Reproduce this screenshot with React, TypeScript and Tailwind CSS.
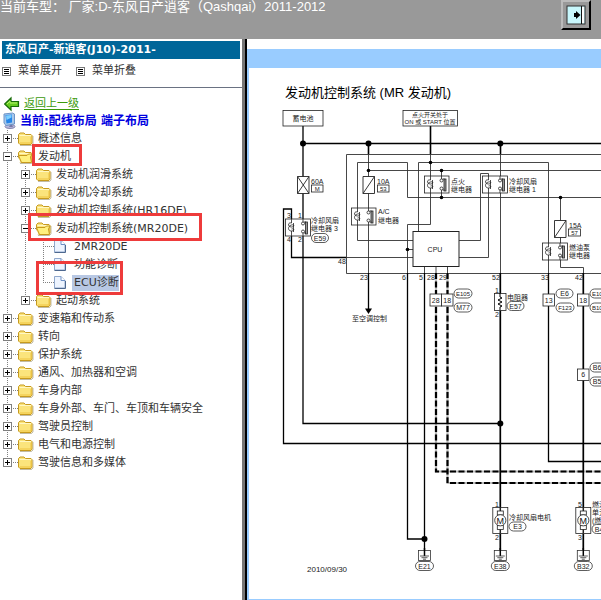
import React, { useState } from "react";

type Node = {
  label: string;
  children?: Node[];
  page?: boolean;
  marker?: string;
};

const tree: Node[] = [
  { label: "概述信息" },
  {
    label: "发动机",
    marker: "left-8 -top-1 w-[50px] h-[22px]",
    children: [
      { label: "发动机润滑系统" },
      { label: "发动机冷却系统" },
      { label: "发动机控制系统(HR16DE)" },
      {
        label: "发动机控制系统(MR20DE)",
        marker: "left-7 -top-[7px] w-[174px] h-7",
        children: [
          { label: "2MR20DE", page: true },
          { label: "功能诊断", page: true },
          {
            label: "ECU诊断",
            page: true,
            marker: "left-9 -top-[13px] w-[87px] h-[34px]",
          },
        ],
      },
      { label: "起动系统" },
    ],
  },
  { label: "变速箱和传动系" },
  { label: "转向" },
  { label: "保护系统" },
  { label: "通风、加热器和空调" },
  { label: "车身内部" },
  { label: "车身外部、车门、车顶和车辆安全" },
  { label: "驾驶员控制" },
  { label: "电气和电源控制" },
  { label: "驾驶信息和多媒体" },
];

const dots = { stroke: "#808080", strokeDasharray: "1 1" };

function Guide({ visible }: { visible: boolean }) {
  return (
    <svg className="w-[18px] h-[18px] shrink-0" viewBox="0 0 18 18">
      {visible && <path d="M7.5 0V18" {...dots} />}
    </svg>
  );
}

function Branch({ last, page, open }: { last: boolean; page?: boolean; open: boolean }) {
  return (
    <svg className="w-[18px] h-[18px] block" viewBox="0 0 18 18" fill="none">
      <path d={last ? "M7.5 0V9" : "M7.5 0V18"} {...dots} />
      <path d="M7 8.5H18" {...dots} />
      {!page && (
        <>
          <rect x="3.5" y="4.5" width="8" height="8" fill="#fff" stroke="#808080" />
          <path d="M5 8.5H10" stroke="#000" />
          {!open && <path d="M7.5 6V11" stroke="#000" />}
        </>
      )}
    </svg>
  );
}

function FolderIcon({ open }: { open: boolean }) {
  return (
    <svg className="w-[18px] h-[18px] shrink-0" viewBox="0 0 18 18">
      <path d="M2 15.5H13.5L15 14V6" fill="none" stroke="#9a8f6a" opacity=".6" />
      <path
        d="M.5 13V4.5L2 3H6L7.5 4.5H13L14 5.5V13L13 14.5H2Z"
        fill="#fbe47c"
        stroke="#c79a1e"
      />
      <path d="M1.5 5.5H13" stroke="#fff7c4" />
      <path d="M2 13H13V7" fill="none" stroke="#efc441" />
      {open && (
        <>
          <path d="M0 6V14L3 15L0 9Z" fill="#fff" />
          <path
            d="M.5 7.5H9L10.5 6H14L12.5 9L13.5 14.5H3.5Z"
            fill="#fff07e"
            stroke="#c79a1e"
          />
        </>
      )}
    </svg>
  );
}

function PageIcon() {
  return (
    <svg className="w-[18px] h-[18px] shrink-0" viewBox="0 0 18 18">
      <path d="M.5 2.5H7L11 6.5V14H.5Z" fill="#edf4ff" stroke="#90a8cc" />
      <path d="M7 2.5V6.5H11" fill="#fff" stroke="#6c8fc4" />
      <path d="M.5 14.5H11.5V7" fill="none" stroke="#4d688f" />
    </svg>
  );
}

function TreeRow({ node, guides, last }: { node: Node; guides: boolean[]; last: boolean }) {
  const [open, setOpen] = useState(!!node.children);
  const selected = node.label === "ECU诊断";

  return (
    <li>
      <div className="relative flex items-center h-[18px] whitespace-nowrap">
        {guides.map((g, i) => (
          <Guide key={i} visible={g} />
        ))}
        {node.page ? (
          <Branch last={last} page open={false} />
        ) : (
          <button
            aria-label={node.label}
            aria-expanded={open}
            onClick={() => setOpen(!open)}
            className="shrink-0"
          >
            <Branch last={last} open={open} />
          </button>
        )}
        {node.page ? <PageIcon /> : <FolderIcon open={open} />}
        <a
          href="#"
          className={
            selected
              ? "pl-0.5 h-4 leading-4 bg-[#b8c8e4] text-[#333]"
              : "pl-0.5 h-4 leading-4 text-[#333]"
          }
        >
          {node.label}
        </a>
        {node.marker && (
          <span
            className={`absolute z-10 border-3 border-[#ee3b3b] pointer-events-none ${node.marker}`}
          />
        )}
      </div>
      {open && node.children && (
        <ul>
          {node.children.map((child, i) => (
            <TreeRow
              key={child.label}
              node={child}
              guides={[...guides, !last]}
              last={i === node.children!.length - 1}
            />
          ))}
        </ul>
      )}
    </li>
  );
}

function MenuIcon() {
  return (
    <svg className="w-[9px] h-[9px]" viewBox="0 0 9 9" fill="none">
      <rect x=".5" y=".5" width="8" height="8" stroke="#777" />
      <path d="M2 2.5H7M2 4.5H7M2 6.5H7" stroke="#000" />
    </svg>
  );
}

function Sidebar() {
  return (
    <aside className="w-[242px] shrink-0 bg-white text-[11px] font-['DejaVu_Sans','Noto_Sans_CJK_SC',sans-serif]">
      <h1 className="mt-0.5 ml-0.5 mr-0.5 h-[18px] pl-[3px] leading-[18px] bg-[#069] text-white font-bold whitespace-nowrap">
        东风日产-新逍客(J10)-2011-
      </h1>
      <div className="flex gap-3.5 h-[29px] pt-0.5 pl-0.5 pb-1.5 items-center border-b border-gray-500 text-[#333]">
        <button className="flex items-center gap-[7px]">
          <MenuIcon />
          菜单展开
        </button>
        <button className="flex items-center gap-[7px]">
          <MenuIcon />
          菜单折叠
        </button>
      </div>
      <nav className="pt-2">
        <div className="flex items-center h-4 pl-1 gap-1">
          <svg className="w-4 h-4" viewBox="0 0 16 16">
            <path
              d="M.7 8L7 2V5.5H14.5V10.5H7V14Z"
              fill="#66cc20"
              stroke="#176b08"
              strokeWidth="1.2"
            />
            <path d="M3 8L6 5V7H13" fill="none" stroke="#b5f36d" />
          </svg>
          <a href="#" className="text-[#3c9a0c] underline underline-offset-2 leading-4">
            返回上一级
          </a>
        </div>
        <div className="flex items-center h-[18px] pl-0.5 text-xs font-bold text-[#0000e0] whitespace-nowrap">
          <svg className="w-[18px] h-[18px]" viewBox="0 0 18 18">
            <ellipse cx="8" cy="14.5" rx="5" ry="2" fill="#b9b9dd" stroke="#8585ae" />
            <path d="M9 11L11 15L7 15Z" fill="#777aa8" />
            <path d="M2 2L10.5 1L12.5 2V12L4 13.5L2 11Z" fill="#a7c7ea" stroke="#6d94c7" />
            <path d="M3.5 3L10 2.5V10.5L4.5 11.5Z" fill="#2585e8" />
            <path d="M4 3.5L9.5 3V5.5L4.5 8Z" fill="#7fd0ff" />
          </svg>
          当前:配线布局 端子布局
        </div>
        <ul>
          {tree.map((node, i) => (
            <TreeRow key={node.label} node={node} guides={[]} last={i === tree.length - 1} />
          ))}
        </ul>
      </nav>
    </aside>
  );
}

function Dot({ x, y, r = 3 }: { x: number; y: number; r?: number }) {
  return <circle cx={x} cy={y} r={r} fill="#000" />;
}

function Oval({ x, y, label, w = 18 }: { x: number; y: number; label: string; w?: number }) {
  return (
    <g>
      <rect x={x} y={y} width={w} height="9" rx="4.5" fill="#fff" stroke="#333" strokeWidth=".8" />
      <text x={x + w / 2} y={y + 7} textAnchor="middle" fontSize={label.length > 3 ? 6 : 7}>
        {label}
      </text>
    </g>
  );
}

function Box({ x, y, label, w = 11.5, h = 12 }: { x: number; y: number; label: string; w?: number; h?: number }) {
  const small = h < 10;
  return (
    <g>
      <rect x={x} y={y} width={w} height={h} fill="#fff" stroke="#222" strokeWidth=".8" />
      <text x={x + w / 2} y={y + h / 2 + (small ? 2 : 2.5)} textAnchor="middle" fontSize={small ? 6 : 7}>
        {label}
      </text>
    </g>
  );
}

// x is the coil's axis, gap the distance to the contact's axis
function Relay({ x, y, gap = 11.5 }: { x: number; y: number; gap?: number }) {
  const c = x + gap;
  return (
    <g fill="none" stroke="#222" strokeWidth=".8">
      <rect x={x - 6} y={y} width={gap + 13.5} height="17" fill="#fff" />
      <path
        d={`M${x} ${y}V${y + 4}C${x - 4} ${y + 3} ${x - 4} ${y + 8} ${x} ${y + 8}C${x + 3} ${y + 8} ${x + 3} ${y + 5} ${x} ${y + 6}C${x - 4} ${y + 7} ${x - 4} ${y + 12} ${x} ${y + 12}C${x + 3} ${y + 12} ${x + 3} ${y + 9} ${x} ${y + 10}M${x} ${y + 12}V${y + 17}`}
      />
      <path d={`M${x + 2} ${y + 4}V${y + 13}`} />
      <path d={`M${c} ${y}V${y + 3}M${c} ${y + 14}V${y + 17}`} />
      <circle cx={c} cy={y + 4.5} r="1.5" />
      <circle cx={c} cy={y + 12.5} r="1.5" />
      <rect x={c + 2.5} y={y + 3} width="2" height="12" fill="#999" />
      <path d={`M${c + 1} ${y + 3}H${c + 3}M${c + 1} ${y + 14}H${c + 3}`} />
    </g>
  );
}

function Motor({ x }: { x: number }) {
  return (
    <g fill="#fff" stroke="#222" strokeWidth=".8">
      <rect x={x - 7.5} y="507.5" width="15" height="26" />
      <path d={`M${x} 507V512M${x} 529V533`} strokeWidth="1.5" />
      <rect x={x - 3} y="511" width="6" height="4" />
      <rect x={x - 3} y="525.5" width="6" height="4" />
      <circle cx={x} cy="520.3" r="5.6" />
      <text x={x} y="523.5" textAnchor="middle" fontSize="9" fill="#111" stroke="none">
        M
      </text>
    </g>
  );
}

function Ground({ x, label }: { x: number; label: string }) {
  return (
    <g>
      <rect x={x - 6} y="550.5" width="12" height="10" fill="#fff" stroke="#333" strokeWidth=".8" />
      <path d={`M${x} 548V556`} stroke="#000" strokeWidth="1.5" />
      <path
        d={`M${x - 4.5} 556H${x + 4.5}M${x - 3} 557.7H${x + 3}M${x - 1.5} 559.2H${x + 1.5}`}
        stroke="#333"
        strokeWidth=".8"
      />
      <Oval x={x - 9} y={561.5} label={label} />
    </g>
  );
}

function Diagram() {
  return (
    <svg
      className="block w-full h-auto font-['Liberation_Sans','Noto_Sans_CJK_SC',sans-serif]"
      viewBox="249 68 352 531"
      fontSize="7"
      fill="#222"
      role="img"
      aria-label="发动机控制系统 (MR 发动机)"
    >
      <text x="285" y="97" fontSize="13" fill="#000">
        发动机控制系统 (MR 发动机)
      </text>

      {/* thin wires */}
      <g fill="none" stroke="#333" strokeWidth=".9">
        <path d="M601 154.5H346.5V273.5H601" />
        <path d="M413 240.5H357.5V162.5H407.5V197.5H601" />
        <path d="M418.5 231V162.5H548.5V273" />
        <path d="M430.5 154V224.5H407.5V273M407.5 249.5H413" />
        <path d="M368.5 154V273M368.5 170.5H601M441.5 170V198" />
        <path d="M459 240.5H480.5V173.5H488.5V257.5H459" />
        <path d="M500.5 154V273M560.5 197V267.5H583.5V273" />
        <path d="M346 257.5H413M424.5 266V273M436 266V273M447.5 266V273" />
      </g>

      {/* shielded CAN lines */}
      <g fill="none">
        <path d="M436 273V471.5H601M447.5 273V483H601" stroke="#bbb" strokeWidth="2.2" />
        <path
          d="M436 273V471.5H601M447.5 273V483H601"
          stroke="#000"
          strokeWidth="2.2"
          strokeDasharray="6 2.5"
        />
      </g>

      {/* power and ground wires */}
      <g fill="none" stroke="#000" strokeWidth="1.3">
        <path d="M303 126V423.5H500M303 143.5H601" />
        <path d="M430.5 126V154M368.5 143V154M500.5 143V154" strokeWidth="1.6" />
        <path d="M291.5 219V209H283.5V443.5H601M291.5 236V257.5H346" />
        <path d="M368.5 273V309M407.5 273V539H424.5M424.5 273V550" />
        <path d="M500.3 273V507M500.3 533V550M583.3 273V507M583.3 533V550" strokeWidth="1.7" />
        <path d="M548.5 273V461.5H601" />
      </g>

      <Dot x={303} y={143.5} />
      <Dot x={368.5} y={143.5} />
      <Dot x={500.3} y={143.5} />
      <Dot x={500.3} y={423.5} />
      <Dot x={424.5} y={539} />
      <Dot x={430.5} y={162.5} r={1.8} />
      <Dot x={368.5} y={170.5} r={1.8} />
      <Dot x={441.5} y={170.5} r={1.8} />
      <Dot x={441.5} y={197.5} r={1.8} />
      <Dot x={560.5} y={197.5} r={1.8} />
      <Dot x={407.5} y={249.5} r={1.8} />
      <path d="M365 308.5H372L368.5 314Z" fill="#000" />

      <Box x={283} y={110.5} w={40} h={15.5} label="蓄电池" />
      <rect x="403" y="110.5" width="54.5" height="15.5" fill="#fff" stroke="#222" strokeWidth=".8" />
      <g fontSize="6" textAnchor="middle">
        <text x="430" y="117">点火开关处于</text>
        <text x="430" y="124">ON 或 START 位置</text>
      </g>

      {/* fuses */}
      <g fill="#fff" stroke="#222" strokeWidth=".9">
        <path d="M297.5 176.5H309V193.5H297.5ZL309 193.5M309 176.5L297.5 193.5" />
        <path d="M363 176.5H374.5V193.5H363ZM374.5 176.5L363 193.5" />
        <path d="M554.5 220.5H566V237.5H554.5ZM566 220.5L554.5 237.5" />
      </g>
      <text x="311" y="184">60A</text>
      <Box x={311.5} y={185} w={11.5} h={7} label="M" />
      <text x="377" y="184">10A</text>
      <Box x={377.5} y={185} w={11.5} h={7} label="53" />
      <text x="569" y="228">15A</text>
      <Box x={568.5} y={229} w={12} h={7} label="57" />

      <Relay x={291.5} y={219} />
      <Relay x={357.5} y={208} gap={11} />
      <Relay x={430.5} y={176} gap={11} />
      <Relay x={488.5} y={176} />
      <Relay x={548.5} y={243} />

      <text x="311" y="223">冷却风扇</text>
      <text x="311" y="231">继电器 3</text>
      <Oval x={311.5} y={233.5} label="E59" w={17} />
      <text x="378" y="214">A/C</text>
      <text x="378" y="223">继电器</text>
      <text x="451" y="184">点火</text>
      <text x="451" y="192">继电器</text>
      <text x="509" y="184">冷却风扇</text>
      <text x="509" y="192">继电器 1</text>
      <text x="569" y="250">燃油泵</text>
      <text x="569" y="258">继电器</text>

      <rect x="413" y="231.5" width="46" height="35" fill="#fff" stroke="#222" />
      <text x="435" y="252" textAnchor="middle">CPU</text>

      {/* terminal numbers */}
      <g>
        <text x="287" y="218">3</text>
        <text x="298" y="218">1</text>
        <text x="287" y="242">4</text>
        <text x="298" y="242">2</text>
        <text x="338" y="264">48</text>
        <text x="360" y="280">23</text>
        <text x="402" y="280">6</text>
        <text x="419" y="280">5</text>
        <text x="427" y="280">28</text>
        <text x="439" y="280">29</text>
        <text x="492" y="280">52</text>
        <text x="541" y="280">33</text>
        <text x="575" y="280">42</text>
        <text x="495" y="293">1</text>
        <text x="495" y="317">2</text>
        <text x="495" y="507">1</text>
        <text x="495" y="540">2</text>
        <text x="578" y="507">5</text>
        <text x="578" y="540">3</text>
      </g>

      <text x="352" y="321">至空调控制</text>

      <Box x={430} y={294} label="28" />
      <Box x={441.5} y={294} label="18" />
      <Oval x={454} y={289} label="E105" />
      <Oval x={454} y={303} label="M77" />
      <rect x="494.5" y="293.5" width="11.5" height="17" fill="#fff" stroke="#222" strokeWidth=".8" />
      <path
        d="M500 293V297L502 298L498 300L502 302L498 304L502 306L500 307V310"
        fill="none"
        stroke="#000"
      />
      <text x="507" y="300">电阻器</text>
      <Oval x={507} y={301.5} label="E57" w={17} />
      <Box x={543} y={294} label="13" />
      <Oval x={556} y={289} label="E6" w={17} />
      <Oval x={556} y={303} label="F123" />
      <Box x={577.5} y={294} label="18" />
      <Oval x={590} y={289} label="E106" />
      <Oval x={590} y={303} label="B101" />
      <Box x={577.5} y={369} label="6" h={11.5} />
      <Oval x={590} y={363} label="B60" />
      <Oval x={590} y={377} label="B54" />

      <Motor x={500.3} />
      <Motor x={583.3} />
      <text x="509" y="520">冷却风扇电机</text>
      <Oval x={509} y={522} label="E3" w={17} />
      <text x="592" y="507">燃油</text>
      <text x="592" y="515">单元</text>
      <text x="592" y="523">(燃油</text>
      <Oval x={592} y={524.5} label="B40" />
      <Ground x={424.5} label="E21" />
      <Ground x={500.3} label="E38" />
      <Ground x={583.3} label="B32" />

      <text x="307" y="572" fontSize="8">2010/09/30</text>
    </svg>
  );
}

export default function App() {
  return (
    <div className="min-h-screen flex flex-col bg-white">
      <header className="flex justify-between items-start h-[39px] pr-2.5 bg-[#999] text-white text-[13px] leading-[14px] whitespace-nowrap font-['Liberation_Sans','Noto_Sans_CJK_SC',sans-serif]">
        <p>当前车型： 厂家:D-东风日产逍客（Qashqai）2011-2012</p>
        <button
          aria-label="显示"
          className="flex justify-center items-center w-[30px] h-[30px] border-2 border-t-[#bbb] border-l-[#bbb] border-b-black border-r-black"
        >
          <svg className="w-5 h-5" viewBox="0 0 20 20">
            <rect x="1" y="1" width="18" height="18" fill="#c8f7fc" stroke="#333" />
            <rect x="15" y="2" width="3" height="16" fill="#fff" />
            <path d="M15.5 1V19" stroke="#111" />
            <path d="M8 8H10V6L14.5 10L10 14V12H8Z" fill="#000" />
          </svg>
        </button>
      </header>
      <div className="flex flex-1">
        <Sidebar />
        <div className="w-[5px] shrink-0 bg-[#777] border-r-2 border-black" />
        <main className="flex-1 min-w-0 flex flex-col pt-2.5">
          <div className="h-[19px] bg-[#9cf]" />
          <div className="flex-1 border-l-2 border-b border-[#9cf]">
            <Diagram />
          </div>
        </main>
      </div>
    </div>
  );
}
